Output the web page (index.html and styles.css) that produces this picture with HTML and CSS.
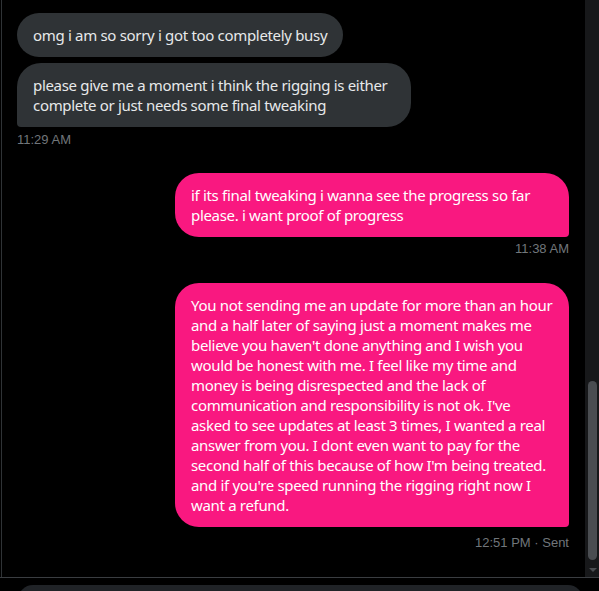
FILE: index.html
```html
<!DOCTYPE html>
<html>
<head>
<meta charset="utf-8">
<link rel="stylesheet" href="styles.css">
</head>
<body>
<div class="app">
  <div class="chat-row">
    <div class="messages">
      <div class="group received">
        <div class="bubble round">omg i am so sorry i got too completely busy</div>
        <div class="bubble last">please give me a moment i think the rigging is either<br>complete or just needs some final tweaking</div>
        <div class="meta">11:29 AM</div>
      </div>
      <div class="group sent">
        <div class="bubble last">if its final tweaking i wanna see the progress so far<br>please. i want proof of progress</div>
        <div class="meta">11:38 AM</div>
      </div>
      <div class="group sent">
        <div class="bubble last">You not sending me an update for more than an hour<br>and a half later of saying just a moment makes me<br>believe you haven't done anything and I wish you<br>would be honest with me. I feel like my time and<br>money is being disrespected and the lack of<br>communication and responsibility is not ok. I've<br>asked to see updates at least 3 times, I wanted a real<br>answer from you. I dont even want to pay for the<br>second half of this because of how I'm being treated.<br>and if you're speed running the rigging right now I<br>want a refund.</div>
        <div class="meta meta-sent">12:51 PM · Sent</div>
      </div>
    </div>
    <div class="scrollbar">
      <div class="thumb"></div>
      <div class="arrow"></div>
    </div>
  </div>
  <div class="composer-area">
    <div class="composer"></div>
  </div>
</div>
</body>
</html>
```
FILE: styles.css
```css
html, body {
  margin: 0;
  padding: 0;
  background: #000;
}
body {
  font-family: "Noto Sans", "Open Sans", sans-serif;
}
.app {
  width: 599px;
  height: 591px;
  display: flex;
  flex-direction: column;
  overflow: hidden;
}
.chat-row {
  height: 580px;
  display: flex;
  padding-left: 1px;
  box-sizing: border-box;
}
.messages {
  flex: 1;
  border-left: 1px solid #2f3336;
  padding: 13px 16px 0 15px;
  overflow: hidden;
}
.group {
  display: flex;
  flex-direction: column;
}
.received {
  align-items: flex-start;
  margin-bottom: 25px;
}
.sent {
  align-items: flex-end;
  margin-bottom: 26px;
}
.bubble {
  max-width: 394px;
  box-sizing: border-box;
  padding: 12px 16px;
  font-size: 15px;
  line-height: 20px;
  letter-spacing: -0.32px;
  border-radius: 24px;
  white-space: nowrap;
}
.received .bubble {
  background: #2f3336;
  color: #e7e9ea;
  margin-bottom: 6px;
}
.received .bubble.last {
  width: 395px;
  border-bottom-left-radius: 4px;
  margin-bottom: 0;
}
.sent .bubble {
  background: #f91880;
  color: #fff;
  width: 394px;
}
.sent .bubble.last {
  border-bottom-right-radius: 4px;
}
.meta {
  font-size: 13px;
  line-height: 16px;
  color: #71767b;
  margin-top: 5px;
  font-family: "Liberation Sans", Arial, sans-serif;
}
.sent .meta {
  margin-top: 4px;
}
.sent .meta.meta-sent {
  margin-top: 8px;
}
.scrollbar {
  width: 14px;
  background: #17181a;
  display: flex;
  flex-direction: column;
  align-items: center;
  padding-top: 381px;
  box-sizing: border-box;
}
.thumb {
  width: 9px;
  height: 179px;
  border-radius: 5px;
  background: #4a4d51;
  margin-left: 1px;
}
.arrow {
  margin-top: 8px;
  width: 0;
  height: 0;
  border-left: 4px solid transparent;
  border-right: 4px solid transparent;
  border-top: 4px solid #4a4d51;
  margin-left: 1px;
}
.composer-area {
  flex: 1;
  border-top: 1px solid #3a3d41;
  padding: 7px 16px 0 18px;
}
.composer {
  height: 30px;
  background: #202327;
  border-radius: 16px;
}
```
